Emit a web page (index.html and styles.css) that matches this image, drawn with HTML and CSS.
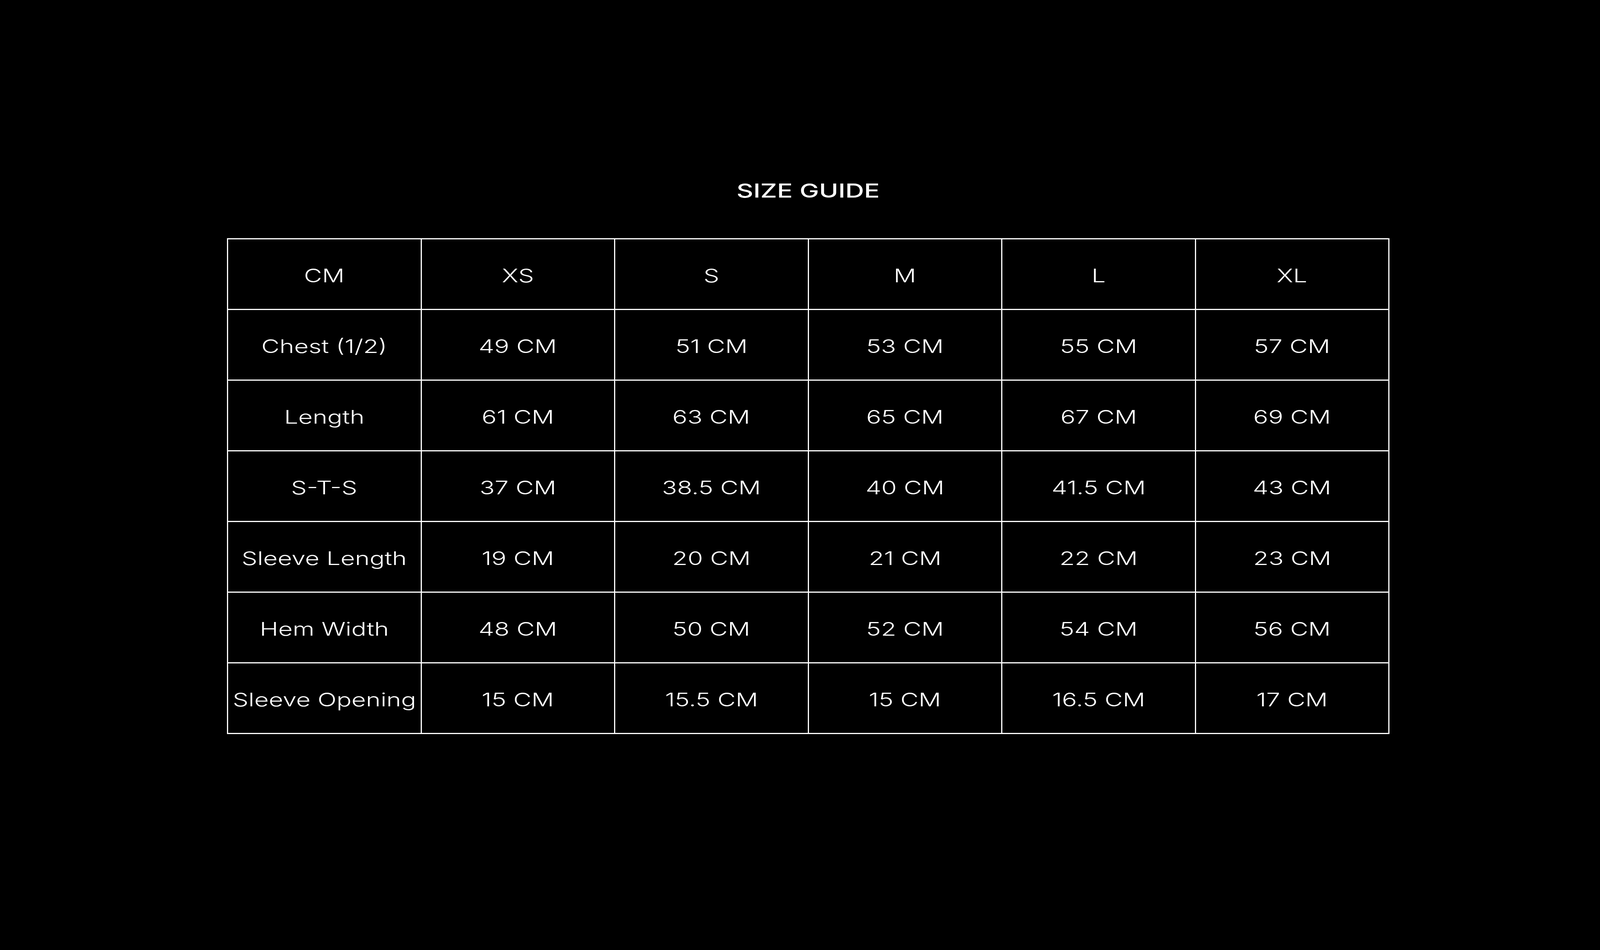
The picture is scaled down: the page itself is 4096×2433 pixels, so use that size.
FILE: index.html
```html
<!DOCTYPE html>
<html lang="en">
<head>
<meta charset="utf-8">
<title>Size Guide</title>
<link rel="stylesheet" href="styles.css">
</head>
<body>
<main class="page">
  <section class="guide">
    <h1 class="title"><span class="wide">SIZE GUIDE</span></h1>
    <table class="sizes">
      <tbody>
        <tr><td><span class="wide">CM</span></td><td><span class="wide">XS</span></td><td><span class="wide">S</span></td><td><span class="wide">M</span></td><td><span class="wide">L</span></td><td><span class="wide">XL</span></td></tr>
        <tr><td><span class="wide">Chest (1/2)</span></td><td><span class="wide">49 CM</span></td><td><span class="wide">51 CM</span></td><td><span class="wide">53 CM</span></td><td><span class="wide">55 CM</span></td><td><span class="wide">57 CM</span></td></tr>
        <tr><td><span class="wide">Length</span></td><td><span class="wide">61 CM</span></td><td><span class="wide">63 CM</span></td><td><span class="wide">65 CM</span></td><td><span class="wide">67 CM</span></td><td><span class="wide">69 CM</span></td></tr>
        <tr><td><span class="wide">S-T-S</span></td><td><span class="wide">37 CM</span></td><td><span class="wide">38.5 CM</span></td><td><span class="wide">40 CM</span></td><td><span class="wide">41.5 CM</span></td><td><span class="wide">43 CM</span></td></tr>
        <tr><td><span class="wide">Sleeve Length</span></td><td><span class="wide">19 CM</span></td><td><span class="wide">20 CM</span></td><td><span class="wide">21 CM</span></td><td><span class="wide">22 CM</span></td><td><span class="wide">23 CM</span></td></tr>
        <tr><td><span class="wide">Hem Width</span></td><td><span class="wide">48 CM</span></td><td><span class="wide">50 CM</span></td><td><span class="wide">52 CM</span></td><td><span class="wide">54 CM</span></td><td><span class="wide">56 CM</span></td></tr>
        <tr><td><span class="wide">Sleeve Opening</span></td><td><span class="wide">15 CM</span></td><td><span class="wide">15.5 CM</span></td><td><span class="wide">15 CM</span></td><td><span class="wide">16.5 CM</span></td><td><span class="wide">17 CM</span></td></tr>
      </tbody>
    </table>
  </section>
</main>
</body>
</html>
```
FILE: styles.css
```css
html, body {
  margin: 0;
  padding: 0;
  background: #000;
}

body {
  color: #fff;
  font-family: Inter, "Liberation Sans", sans-serif;
}

.page {
  padding: 463px 0 0 581px;
  min-height: 1970px;
}

.guide {
  width: 2976px;
  display: flex;
  flex-direction: column;
  align-items: center;
}

.title {
  margin: 0 0 97px 0;
  font-size: 50px;
  line-height: 50px;
  font-weight: 500;
  text-align: center;
}

.wide {
  display: inline-block;
  transform: scaleX(1.33);
  transform-origin: center;
  white-space: nowrap;
}

.sizes {
  width: 2976px;
  table-layout: fixed;
  border-collapse: separate;
  border-spacing: 3px;
  background: #fff;
}

.sizes td {
  background: #000;
  height: 178px;
  padding: 8px 0 0 0;
  box-sizing: border-box;
  text-align: center;
  vertical-align: middle;
  font-size: 48px;
  line-height: 48px;
  font-weight: 300;
  color: #fff;
}
```
